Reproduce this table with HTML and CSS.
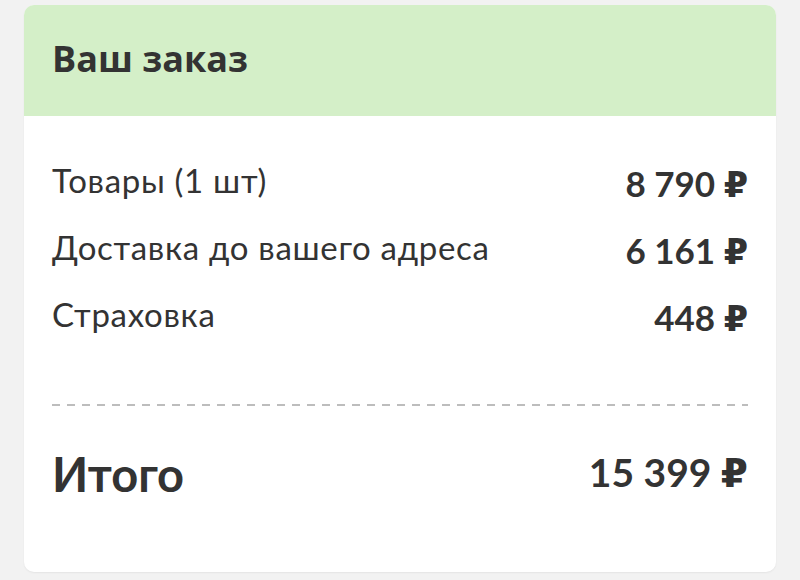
FILE: index.html
```html
<!DOCTYPE html>
<html lang="ru">
<head>
<meta charset="utf-8">
<link rel="stylesheet" href="styles.css">
</head>
<body>
<div class="card">
  <div class="card-head">
    <h1 class="title">Ваш заказ</h1>
  </div>
  <div class="card-body">
    <div class="rows">
      <div class="row"><span class="label">Товары (1 шт)</span><span class="value">8 790 ₽</span></div>
      <div class="row"><span class="label">Доставка до вашего адреса</span><span class="value">6 161 ₽</span></div>
      <div class="row"><span class="label">Страховка</span><span class="value">448 ₽</span></div>
    </div>
    <div class="divider"></div>
    <div class="total">
      <span class="total-label">Итого</span>
      <span class="total-value">15 399 ₽</span>
    </div>
  </div>
</div>
</body>
</html>
```
FILE: styles.css
```css
html, body {
  margin: 0;
  padding: 0;
  background: #f2f2f2;
}
body {
  padding: 5px 24px 8px 24px;
  font-family: Lato, "Open Sans", "DejaVu Sans", sans-serif;
  color: #333333;
}
.card {
  background: #ffffff;
  border-radius: 10px;
  overflow: hidden;
  height: 567px;
  box-shadow: 0 1px 2px rgba(0,0,0,0.06);
}
.card-head {
  background: #d4efc8;
  height: 111px;
  box-sizing: border-box;
  padding: 34px 28px 0 28px;
}
.title {
  margin: 0;
  font-family: "Open Sans", Lato, sans-serif;
  font-size: 36px;
  line-height: 40px;
  font-weight: 700;
  color: #333333;
}
.card-body {
  padding: 42px 28px 0 28px;
}
.rows {
  display: flex;
  flex-direction: column;
  gap: 23px;
}
.row {
  display: flex;
  justify-content: space-between;
  align-items: flex-start;
  height: 44px;
}
.label {
  font-size: 33px;
  line-height: 44px;
  font-weight: 400;
  letter-spacing: 0.7px;
}
.value {
  font-size: 35px;
  line-height: 44px;
  font-weight: 700;
  margin-top: 3px;
}
.divider {
  margin-top: 68px;
  height: 2px;
  background-image: linear-gradient(to right, #bdbdbd 0, #bdbdbd 8px, transparent 8px);
  background-size: 15px 2px;
  background-repeat: repeat-x;
}
.total {
  margin-top: 38px;
  display: flex;
  justify-content: space-between;
  align-items: flex-start;
  height: 60px;
}
.total-label {
  font-size: 47px;
  line-height: 60px;
  font-weight: 700;
}
.total-value {
  font-size: 39px;
  line-height: 60px;
  font-weight: 700;
  margin-top: -2px;
}
```
